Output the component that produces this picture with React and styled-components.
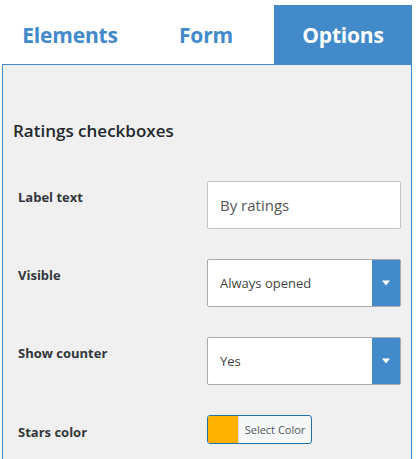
import React from "react";
import styled, { createGlobalStyle } from "styled-components";

const Global = createGlobalStyle`
  html, body { margin: 0; padding: 0; background: #fff; overflow: hidden; }
  body { font-family: "Open Sans", "Noto Sans", sans-serif; }
`;

const BLUE = "#428ac9";

const Wrapper = styled.div`
  width: 410px;
  margin-left: 2px;
  padding-top: 5px;
`;

const Tabs = styled.div`
  display: grid;
  grid-template-columns: 136px 136px 1fr;
  height: 59px;
`;

const Tab = styled.div`
  display: flex;
  align-items: center;
  justify-content: center;
  font-size: 21px;
  font-weight: 700;
  letter-spacing: -0.2px;
  color: ${(p) => (p.$active ? "#fff" : BLUE)};
  background: ${(p) => (p.$active ? BLUE : "transparent")};
  padding-bottom: 0;
`;

const Panel = styled.div`
  box-sizing: border-box;
  border: 1px solid ${BLUE};
  border-bottom: none;
  background: #f0f0f0;
  height: 395px;
  padding: 54px 10px 0 10px;
`;

const Heading = styled.h3`
  margin: 0 0 38px 0;
  font-size: 17px;
  font-weight: 600;
  color: #23282d;
  line-height: 24px;
`;

const Rows = styled.div`
  display: flex;
  flex-direction: column;
  gap: 30px;
  padding-left: 5px;
`;

const Row = styled.div`
  display: grid;
  grid-template-columns: 189px 194px;
  align-items: start;
`;

const Label = styled.div`
  font-size: 13px;
  font-weight: 700;
  color: #32373c;
  line-height: 18px;
  padding-top: ${(p) => p.$top || 7}px;
`;

const TextInput = styled.div`
  box-sizing: border-box;
  height: 48px;
  border: 1px solid #c3c3c3;
  border-radius: 2px;
  background: #fff;
  display: flex;
  align-items: center;
  padding-left: 12px;
  font-size: 15px;
  color: #555;
`;

const Select = styled.div`
  box-sizing: border-box;
  height: 48px;
  border: 1px solid #aaa;
  border-radius: 2px;
  background: #fff;
  display: flex;
  align-items: stretch;
`;

const SelectValue = styled.div`
  flex: 1;
  display: flex;
  align-items: center;
  padding-left: 12px;
  font-size: 13px;
  color: #444;
`;

const Arrow = styled.div`
  width: 28px;
  background: ${BLUE};
  display: flex;
  align-items: center;
  justify-content: center;
`;

const ColorButton = styled.div`
  box-sizing: border-box;
  width: 105px;
  height: 29px;
  border: 1px solid #2271b1;
  border-radius: 3px;
  background: #f6f7f7;
  display: flex;
  overflow: hidden;
`;

const Swatch = styled.div`
  width: 30px;
  background: ${(p) => p.$color};
  border-right: 1px solid #dcdcde;
`;

const ColorText = styled.div`
  flex: 1;
  display: flex;
  align-items: center;
  justify-content: center;
  font-size: 11px;
  color: #50575e;
`;

const Caret = () => (
  <svg width="10" height="6" viewBox="0 0 10 6">
    <path d="M1 0.5 L9 0.5 L5 5.5 Z" fill="#fff" />
  </svg>
);

export default function App() {
  return (
    <>
      <Global />
      <Wrapper>
        <Tabs>
          <Tab>Elements</Tab>
          <Tab>Form</Tab>
          <Tab $active>Options</Tab>
        </Tabs>
        <Panel>
          <Heading>Ratings checkboxes</Heading>
          <Rows>
            <Row>
              <Label>Label text</Label>
              <TextInput>By ratings</TextInput>
            </Row>
            <Row>
              <Label>Visible</Label>
              <Select>
                <SelectValue>Always opened</SelectValue>
                <Arrow>
                  <Caret />
                </Arrow>
              </Select>
            </Row>
            <Row>
              <Label>Show counter</Label>
              <Select>
                <SelectValue>Yes</SelectValue>
                <Arrow>
                  <Caret />
                </Arrow>
              </Select>
            </Row>
            <Row>
              <Label $top={8}>Stars color</Label>
              <ColorButton>
                <Swatch $color="#ffb000" />
                <ColorText>Select Color</ColorText>
              </ColorButton>
            </Row>
          </Rows>
        </Panel>
      </Wrapper>
    </>
  );
}
